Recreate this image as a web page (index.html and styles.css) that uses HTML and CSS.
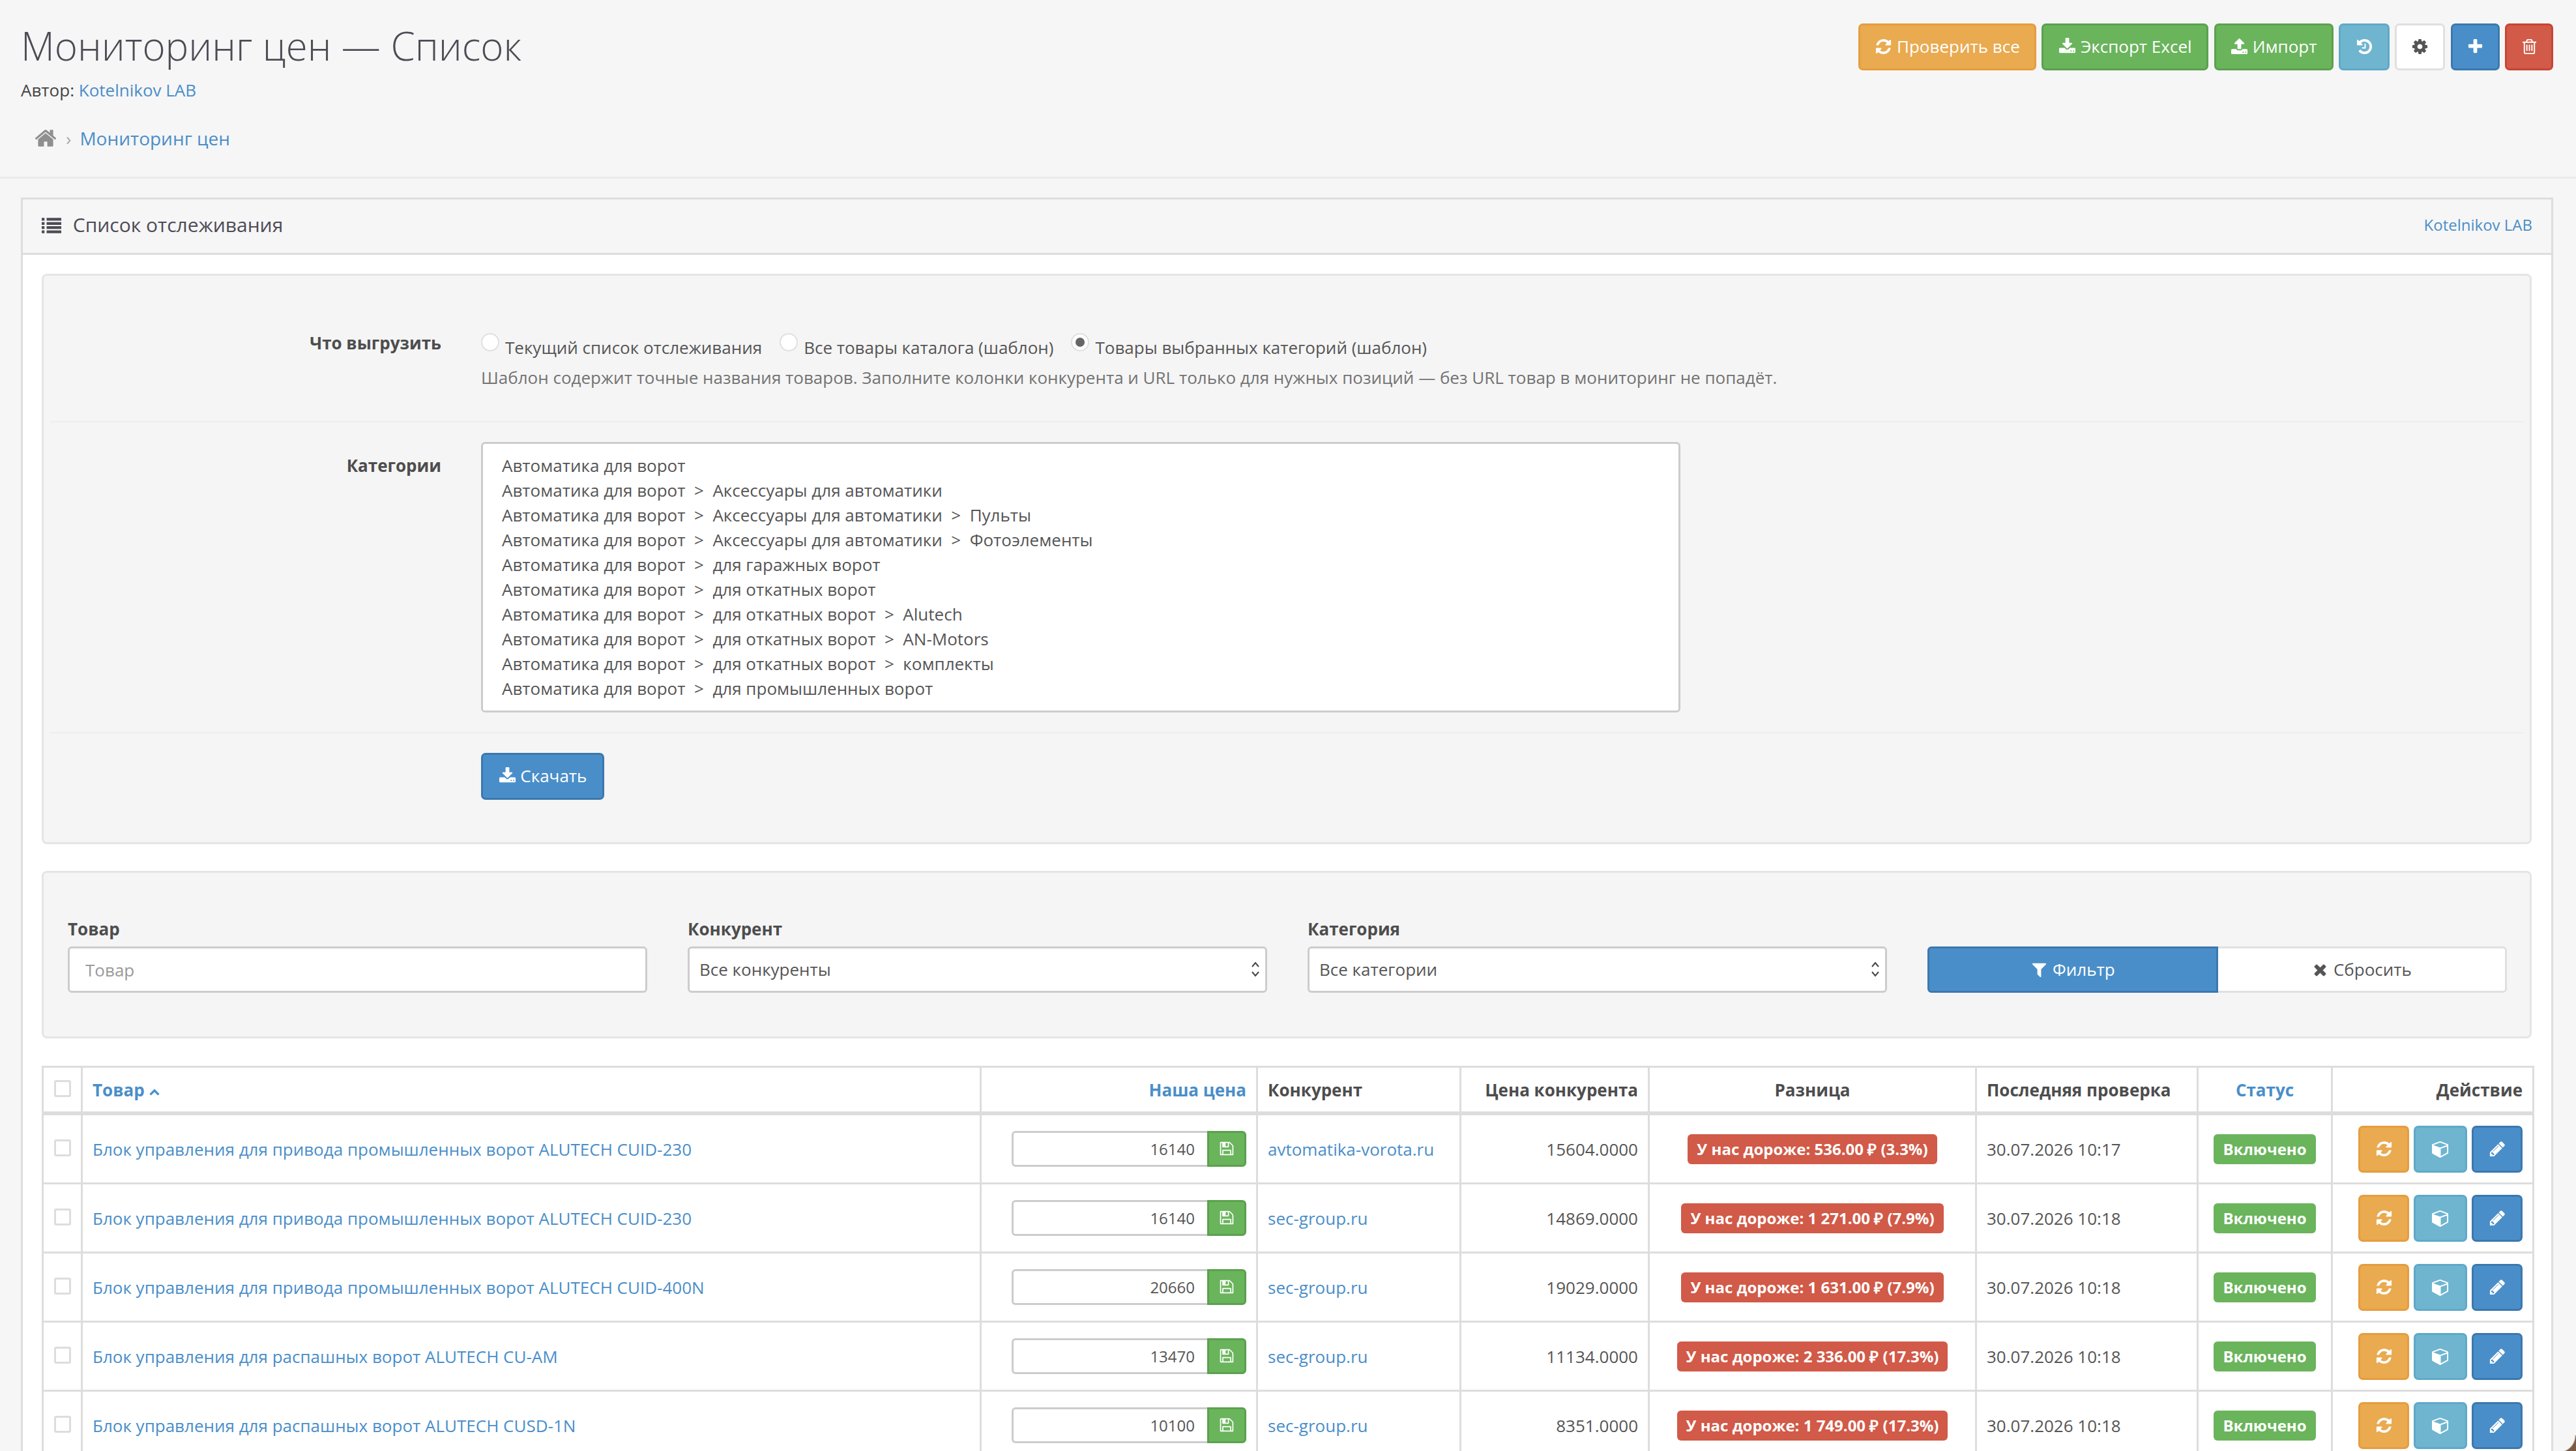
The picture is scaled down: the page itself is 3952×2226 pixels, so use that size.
FILE: index.html
```html
<!DOCTYPE html>
<html lang="ru">
<head>
  <meta charset="UTF-8">
  <title>Мониторинг цен — Список</title>
  <link rel="stylesheet" href="styles.css">
</head>
<body>
  <svg class="sprite" xmlns="http://www.w3.org/2000/svg">
    <symbol id="i-refresh" viewBox="0 0 1792 1792"><path d="M1639 1056q0 5-1 7-64 268-268 434.5t-478 166.5q-146 0-282.5-55t-243.5-157l-129 129q-19 19-45 19t-45-19-19-45v-448q0-26 19-45t45-19h448q26 0 45 19t19 45-19 45l-137 137q71 66 161 102t187 36q134 0 250-65t186-179q11-17 53-117 8-23 30-23h192q13 0 22.5 9.5t9.5 22.5zm25-800v448q0 26-19 45t-45 19h-448q-26 0-45-19t-19-45 19-45l138-138q-148-137-349-137-134 0-250 65t-186 179q-11 17-53 117-8 23-30 23h-199q-13 0-22.5-9.5t-9.5-22.5v-7q65-268 270-434.5t480-166.5q146 0 284 55.5t245 156.5l130-129q19-19 45-19t45 19 19 45z"/></symbol>
    <symbol id="i-download" viewBox="0 0 1792 1792"><path d="M1344 1344q0-26-19-45t-45-19-45 19-19 45 19 45 45 19 45-19 19-45zm256 0q0-26-19-45t-45-19-45 19-19 45 19 45 45 19 45-19 19-45zm128-224v320q0 40-28 68t-68 28h-1472q-40 0-68-28t-28-68v-320q0-40 28-68t68-28h465l135 136q58 56 136 56t136-56l136-136h464q40 0 68 28t28 68zm-325-569q17 41-14 70l-448 448q-18 19-45 19t-45-19l-448-448q-31-29-14-70 17-39 59-39h256v-448q0-26 19-45t45-19h256q26 0 45 19t19 45v448h256q42 0 59 39z"/></symbol>
    <symbol id="i-upload" viewBox="0 0 1792 1792"><path d="M1344 1472q0-26-19-45t-45-19-45 19-19 45 19 45 45 19 45-19 19-45zm256 0q0-26-19-45t-45-19-45 19-19 45 19 45 45 19 45-19 19-45zm128-224v320q0 40-28 68t-68 28h-1472q-40 0-68-28t-28-68v-320q0-40 28-68t68-28h427q21 56 70.5 92t110.5 36h256q61 0 110.5-36t70.5-92h427q40 0 68 28t28 68zm-325-648q-17 40-59 40h-256v448q0 26-19 45t-45 19h-256q-26 0-45-19t-19-45v-448h-256q-42 0-59-40-17-39 14-69l448-448q18-19 45-19t45 19l448 448q31 30 14 69z"/></symbol>
    <symbol id="i-history" viewBox="0 0 1792 1792"><path d="M1664 896q0 156-61 298t-164 245-245 164-298 61q-172 0-327-72.5t-264-204.5q-7-10-6.5-22.5t8.5-20.5l137-138q10-9 25-9 16 2 23 12 73 95 179 147t225 52q104 0 198.5-40.5t163.5-109.5 109.5-163.5 40.5-198.5-40.5-198.5-109.5-163.5-163.5-109.5-198.5-40.5q-98 0-188 35.5t-160 101.5l137 138q31 30 14 69-17 40-59 40h-448q-26 0-45-19t-19-45v-448q0-42 40-59 39-17 69 14l130 129q107-101 244.5-156.5t284.5-55.5q156 0 298 61t245 164 164 245 61 298zm-640-288v448q0 14-9 23t-23 9h-320q-14 0-23-9t-9-23v-64q0-14 9-23t23-9h224v-352q0-14 9-23t23-9h64q14 0 23 9t9 23z"/></symbol>
    <symbol id="i-cog" viewBox="0 0 1792 1792"><path d="M1152 896q0-106-75-181t-181-75-181 75-75 181 75 181 181 75 181-75 75-181zm512-109v222q0 12-8 23t-20 13l-185 28q-19 54-39 91 35 50 107 138 10 12 10 25t-9 23q-27 37-99 108t-94 71q-12 0-26-9l-138-108q-44 23-91 38-16 136-29 186-7 28-36 28h-222q-14 0-24.5-8.5t-11.5-21.5l-28-184q-49-16-90-37l-141 107q-10 9-25 9-14 0-25-11-126-114-165-168-7-10-7-23 0-12 8-23 15-21 51-66.5t54-70.5q-27-50-41-99l-183-27q-13-2-21-12.5t-8-23.5v-222q0-12 8-23t19-13l186-28q14-46 39-92-40-57-107-138-10-12-10-24 0-10 9-23 26-36 98.5-107.5t94.5-71.5q13 0 26 10l138 107q44-23 91-38 16-136 29-186 7-28 36-28h222q14 0 24.5 8.5t11.5 21.5l28 184q49 16 90 37l142-107q9-9 24-9 13 0 25 10 129 119 165 170 7 8 7 22 0 12-8 23-15 21-51 66.5t-54 70.5q26 50 41 98l183 28q13 2 21 12.5t8 23.5z"/></symbol>
    <symbol id="i-plus" viewBox="0 0 1792 1792"><path d="M1600 736v192q0 40-28 68t-68 28h-416v416q0 40-28 68t-68 28h-192q-40 0-68-28t-28-68v-416h-416q-40 0-68-28t-28-68v-192q0-40 28-68t68-28h416v-416q0-40 28-68t68-28h192q40 0 68 28t28 68v416h416q40 0 68 28t28 68z"/></symbol>
    <symbol id="i-trash" viewBox="0 0 1792 1792"><path d="M704 736v576q0 14-9 23t-23 9h-64q-14 0-23-9t-9-23v-576q0-14 9-23t23-9h64q14 0 23 9t9 23zm256 0v576q0 14-9 23t-23 9h-64q-14 0-23-9t-9-23v-576q0-14 9-23t23-9h64q14 0 23 9t9 23zm256 0v576q0 14-9 23t-23 9h-64q-14 0-23-9t-9-23v-576q0-14 9-23t23-9h64q14 0 23 9t9 23zm128 724v-948h-896v948q0 22 7 40.5t14.5 27 10.5 8.5h832q3 0 10.5-8.5t14.5-27 7-40.5zm-672-1076h448l-48-117q-7-9-17-11h-317q-10 2-17 11zm928 32v64q0 14-9 23t-23 9h-96v948q0 83-47 143.5t-113 60.5h-832q-66 0-113-58.5t-47-141.5v-952h-96q-14 0-23-9t-9-23v-64q0-14 9-23t23-9h309l70-167q15-37 54-63t79-26h320q40 0 79 26t54 63l70 167h309q14 0 23 9t9 23z"/></symbol>
    <symbol id="i-home" viewBox="0 0 1792 1792"><path d="M1472 992v480q0 26-19 45t-45 19h-384v-384h-256v384h-384q-26 0-45-19t-19-45v-480q0-1 .5-3t.5-3l575-474 575 474q1 2 1 6zm223-69l-62 74q-8 9-21 11h-3q-13 0-21-7l-692-577-692 577q-12 8-24 7-13-2-21-11l-62-74q-8-10-7-23.5t11-21.5l719-599q32-26 76-26t76 26l244 204v-195q0-14 9-23t23-9h192q14 0 23 9t9 23v408l219 182q10 8 11 21.5t-7 23.5z"/></symbol>
    <symbol id="i-list" viewBox="0 0 1792 1792"><path d="M0 192h256v256h-256zM448 192h1344v256h-1344zM0 576h256v256h-256zM448 576h1344v256h-1344zM0 960h256v256h-256zM448 960h1344v256h-1344zM0 1344h256v256h-256zM448 1344h1344v256h-1344z"/></symbol>
    <symbol id="i-filter" viewBox="0 0 1792 1792"><path d="M1595 295q17 41-14 70l-493 493v742q0 42-39 59-13 5-25 5-27 0-45-19l-256-256q-19-19-19-45v-486l-493-493q-31-29-14-70 17-39 59-39h1280q42 0 59 39z"/></symbol>
    <symbol id="i-times" viewBox="0 0 1792 1792"><path d="M1490 1322q0 40-28 68l-136 136q-28 28-68 28t-68-28l-294-294-294 294q-28 28-68 28t-68-28l-136-136q-28-28-28-68t28-68l294-294-294-294q-28-28-28-68t28-68l136-136q28-28 68-28t68 28l294 294 294-294q28-28 68-28t68 28l136 136q28 28 28 68t-28 68l-294 294 294 294q28 28 28 68z"/></symbol>
    <symbol id="i-save" viewBox="0 0 1792 1792"><path d="M512 1536h768v-384h-768v384zm896 0h128v-896q0-14-10-38.5t-20-34.5l-281-281q-10-10-34-20t-39-10v416q0 40-28 68t-68 28h-576q-40 0-68-28t-28-68v-416h-128v1280h128v-416q0-40 28-68t68-28h832q40 0 68 28t28 68v416zm-384-928v-320q0-13-9.5-22.5t-22.5-9.5h-192q-13 0-22.5 9.5t-9.5 22.5v320q0 13 9.5 22.5t22.5 9.5h192q13 0 22.5-9.5t9.5-22.5zm640 32v928q0 40-28 68t-68 28h-1344q-40 0-68-28t-28-68v-1344q0-40 28-68t68-28h928q40 0 88 20t76 48l280 280q28 28 48 76t20 88z"/></symbol>
    <symbol id="i-cube" viewBox="0 0 1792 1792"><path d="M896 1629l640-349v-636l-640 233v752zm-64-865l698-254-698-254-698 254zm832-252v768q0 35-18 65t-49 47l-704 384q-28 16-61 16t-61-16l-704-384q-31-17-49-47t-18-65v-768q0-40 23-73t61-47l704-256q22-8 44-8t44 8l704 256q38 14 61 47t23 73z"/></symbol>
    <symbol id="i-pencil" viewBox="0 0 1792 1792"><path d="M491 1536l91-91-235-235-91 91v107h128v128h107zm523-928q0-22-22-22-10 0-17 7l-542 542q-7 7-7 17 0 22 22 22 10 0 17-7l542-542q7-7 7-17zm-54-192l416 416-832 832h-416v-416zm683 96q0 53-37 90l-166 166-416-416 166-165q36-38 90-38 53 0 91 38l235 234q37 39 37 91z"/></symbol>
  </svg>

  <div class="page-header">
    <div class="page-title">
      <h1>Мониторинг цен — Список</h1>
      <div class="author">Автор: <a href="#">Kotelnikov LAB</a></div>
      <div class="breadcrumb">
        <svg class="ic ic-home"><use href="#i-home"/></svg>
        <span class="crumb-sep">›</span>
        <a href="#">Мониторинг цен</a>
      </div>
    </div>
    <div class="page-actions">
      <a class="btn btn-warning"><svg class="ic"><use href="#i-refresh"/></svg> Проверить все</a>
      <a class="btn btn-success"><svg class="ic"><use href="#i-download"/></svg> Экспорт Excel</a>
      <a class="btn btn-success"><svg class="ic"><use href="#i-upload"/></svg> Импорт</a>
      <a class="btn btn-info btn-icon"><svg class="ic"><use href="#i-history"/></svg></a>
      <a class="btn btn-default btn-icon"><svg class="ic"><use href="#i-cog"/></svg></a>
      <a class="btn btn-primary btn-icon"><svg class="ic"><use href="#i-plus"/></svg></a>
      <a class="btn btn-danger btn-icon"><svg class="ic"><use href="#i-trash"/></svg></a>
    </div>
  </div>

  <div class="panel">
    <div class="panel-heading">
      <h3><svg class="ic"><use href="#i-list"/></svg> Список отслеживания</h3>
      <a class="panel-link" href="#">Kotelnikov LAB</a>
    </div>
    <div class="panel-body">

      <div class="well export-well">
        <div class="form-row form-row-first">
          <label class="form-label">Что выгрузить</label>
          <div>
            <div class="radios">
              <label class="radio"><span class="radio-dot"></span> Текущий список отслеживания</label>
              <label class="radio"><span class="radio-dot"></span> Все товары каталога (шаблон)</label>
              <label class="radio"><span class="radio-dot checked"></span> Товары выбранных категорий (шаблон)</label>
            </div>
            <div class="help">Шаблон содержит точные названия товаров. Заполните колонки конкурента и URL только для нужных позиций — без URL товар в мониторинг не попадёт.</div>
          </div>
        </div>
        <div class="form-row">
          <label class="form-label form-label-list">Категории</label>
          <div class="listbox">
            <div>Автоматика для ворот</div>
            <div>Автоматика для ворот&nbsp;&nbsp;&gt;&nbsp;&nbsp;Аксессуары для автоматики</div>
            <div>Автоматика для ворот&nbsp;&nbsp;&gt;&nbsp;&nbsp;Аксессуары для автоматики&nbsp;&nbsp;&gt;&nbsp;&nbsp;Пульты</div>
            <div>Автоматика для ворот&nbsp;&nbsp;&gt;&nbsp;&nbsp;Аксессуары для автоматики&nbsp;&nbsp;&gt;&nbsp;&nbsp;Фотоэлементы</div>
            <div>Автоматика для ворот&nbsp;&nbsp;&gt;&nbsp;&nbsp;для гаражных ворот</div>
            <div>Автоматика для ворот&nbsp;&nbsp;&gt;&nbsp;&nbsp;для откатных ворот</div>
            <div>Автоматика для ворот&nbsp;&nbsp;&gt;&nbsp;&nbsp;для откатных ворот&nbsp;&nbsp;&gt;&nbsp;&nbsp;Alutech</div>
            <div>Автоматика для ворот&nbsp;&nbsp;&gt;&nbsp;&nbsp;для откатных ворот&nbsp;&nbsp;&gt;&nbsp;&nbsp;AN-Motors</div>
            <div>Автоматика для ворот&nbsp;&nbsp;&gt;&nbsp;&nbsp;для откатных ворот&nbsp;&nbsp;&gt;&nbsp;&nbsp;комплекты</div>
            <div>Автоматика для ворот&nbsp;&nbsp;&gt;&nbsp;&nbsp;для промышленных ворот</div>
          </div>
        </div>
        <div class="form-row form-row-last">
          <span></span>
          <div><a class="btn btn-primary btn-download"><svg class="ic"><use href="#i-download"/></svg> Скачать</a></div>
        </div>
      </div>

      <div class="well filter-well">
        <div class="filter-col">
          <label class="filter-label">Товар</label>
          <input class="form-control" type="text" placeholder="Товар">
        </div>
        <div class="filter-col">
          <label class="filter-label">Конкурент</label>
          <div class="select-box">Все конкуренты <svg class="select-arrows" viewBox="0 0 14 26"><path d="M2 9l5-6 5 6M2 17l5 6 5-6"/></svg></div>
        </div>
        <div class="filter-col">
          <label class="filter-label">Категория</label>
          <div class="select-box">Все категории <svg class="select-arrows" viewBox="0 0 14 26"><path d="M2 9l5-6 5 6M2 17l5 6 5-6"/></svg></div>
        </div>
        <div class="filter-col filter-buttons">
          <a class="btn btn-primary"><svg class="ic"><use href="#i-filter"/></svg> Фильтр</a>
          <a class="btn btn-default"><svg class="ic"><use href="#i-times"/></svg> Сбросить</a>
        </div>
      </div>

      <table class="list-table">
        <colgroup>
          <col class="col-check"><col class="col-name"><col class="col-price"><col class="col-comp">
          <col class="col-cprice"><col class="col-diff"><col class="col-date"><col class="col-status"><col class="col-action">
        </colgroup>
        <thead>
          <tr>
            <th><span class="check"></span></th>
            <th><a href="#">Товар <svg class="sort-up" viewBox="0 0 14 10"><path d="M2 8l5-5 5 5"/></svg></a></th>
            <th class="right"><a href="#">Наша цена</a></th>
            <th>Конкурент</th>
            <th class="right">Цена конкурента</th>
            <th class="center">Разница</th>
            <th>Последняя проверка</th>
            <th class="center"><a href="#">Статус</a></th>
            <th class="right">Действие</th>
          </tr>
        </thead>
        <tbody>
          <tr>
            <td><span class="check"></span></td>
            <td><a href="#">Блок управления для привода промышленных ворот ALUTECH CUID-230</a></td>
            <td><div class="price-group"><input class="price-input" type="text" value="16140"><a class="btn btn-success price-save"><svg class="ic"><use href="#i-save"/></svg></a></div></td>
            <td><a href="#">avtomatika-vorota.ru</a></td>
            <td class="right">15604.0000</td>
            <td class="center"><span class="label label-danger">У нас дороже: 536.00 ₽ (3.3%)</span></td>
            <td>30.07.2026 10:17</td>
            <td class="center"><span class="label label-success">Включено</span></td>
            <td><div class="row-actions"><a class="btn btn-warning"><svg class="ic"><use href="#i-refresh"/></svg></a><a class="btn btn-info btn-cube"><svg class="ic"><use href="#i-cube"/></svg></a><a class="btn btn-primary"><svg class="ic"><use href="#i-pencil"/></svg></a></div></td>
          </tr>
          <tr>
            <td><span class="check"></span></td>
            <td><a href="#">Блок управления для привода промышленных ворот ALUTECH CUID-230</a></td>
            <td><div class="price-group"><input class="price-input" type="text" value="16140"><a class="btn btn-success price-save"><svg class="ic"><use href="#i-save"/></svg></a></div></td>
            <td><a href="#">sec-group.ru</a></td>
            <td class="right">14869.0000</td>
            <td class="center"><span class="label label-danger">У нас дороже: 1 271.00 ₽ (7.9%)</span></td>
            <td>30.07.2026 10:18</td>
            <td class="center"><span class="label label-success">Включено</span></td>
            <td><div class="row-actions"><a class="btn btn-warning"><svg class="ic"><use href="#i-refresh"/></svg></a><a class="btn btn-info btn-cube"><svg class="ic"><use href="#i-cube"/></svg></a><a class="btn btn-primary"><svg class="ic"><use href="#i-pencil"/></svg></a></div></td>
          </tr>
          <tr>
            <td><span class="check"></span></td>
            <td><a href="#">Блок управления для привода промышленных ворот ALUTECH CUID-400N</a></td>
            <td><div class="price-group"><input class="price-input" type="text" value="20660"><a class="btn btn-success price-save"><svg class="ic"><use href="#i-save"/></svg></a></div></td>
            <td><a href="#">sec-group.ru</a></td>
            <td class="right">19029.0000</td>
            <td class="center"><span class="label label-danger">У нас дороже: 1 631.00 ₽ (7.9%)</span></td>
            <td>30.07.2026 10:18</td>
            <td class="center"><span class="label label-success">Включено</span></td>
            <td><div class="row-actions"><a class="btn btn-warning"><svg class="ic"><use href="#i-refresh"/></svg></a><a class="btn btn-info btn-cube"><svg class="ic"><use href="#i-cube"/></svg></a><a class="btn btn-primary"><svg class="ic"><use href="#i-pencil"/></svg></a></div></td>
          </tr>
          <tr>
            <td><span class="check"></span></td>
            <td><a href="#">Блок управления для распашных ворот ALUTECH CU-AM</a></td>
            <td><div class="price-group"><input class="price-input" type="text" value="13470"><a class="btn btn-success price-save"><svg class="ic"><use href="#i-save"/></svg></a></div></td>
            <td><a href="#">sec-group.ru</a></td>
            <td class="right">11134.0000</td>
            <td class="center"><span class="label label-danger">У нас дороже: 2 336.00 ₽ (17.3%)</span></td>
            <td>30.07.2026 10:18</td>
            <td class="center"><span class="label label-success">Включено</span></td>
            <td><div class="row-actions"><a class="btn btn-warning"><svg class="ic"><use href="#i-refresh"/></svg></a><a class="btn btn-info btn-cube"><svg class="ic"><use href="#i-cube"/></svg></a><a class="btn btn-primary"><svg class="ic"><use href="#i-pencil"/></svg></a></div></td>
          </tr>
          <tr>
            <td><span class="check"></span></td>
            <td><a href="#">Блок управления для распашных ворот ALUTECH CUSD-1N</a></td>
            <td><div class="price-group"><input class="price-input" type="text" value="10100"><a class="btn btn-success price-save"><svg class="ic"><use href="#i-save"/></svg></a></div></td>
            <td><a href="#">sec-group.ru</a></td>
            <td class="right">8351.0000</td>
            <td class="center"><span class="label label-danger">У нас дороже: 1 749.00 ₽ (17.3%)</span></td>
            <td>30.07.2026 10:18</td>
            <td class="center"><span class="label label-success">Включено</span></td>
            <td><div class="row-actions"><a class="btn btn-warning"><svg class="ic"><use href="#i-refresh"/></svg></a><a class="btn btn-info btn-cube"><svg class="ic"><use href="#i-cube"/></svg></a><a class="btn btn-primary"><svg class="ic"><use href="#i-pencil"/></svg></a></div></td>
          </tr>
        </tbody>
      </table>

    </div>
  </div>

  <div class="window-corner"></div>
</body>
</html>
```

FILE: styles.css
```css
html, body {
  margin: 0;
  height: 2226px;
  overflow: hidden;
}

body {
  position: relative;
  background: #f6f6f6;
  color: #555;
  font-family: "Open Sans", sans-serif;
  font-size: 26px;
  line-height: 38px;
}

a {
  color: #4a8ec9;
  text-decoration: none;
}

.sprite {
  display: none;
}

.ic {
  width: 27px;
  height: 27px;
  fill: currentColor;
  vertical-align: -4px;
}

/* page header */
.page-header {
  display: flex;
  justify-content: space-between;
  box-sizing: border-box;
  height: 274px;
  padding: 36px 35px 0 32px;
  border-bottom: 3px solid #ebebeb;
}

.page-header h1 {
  margin: 0;
  color: #4c4c55;
  font-size: 60px;
  font-weight: 300;
  line-height: 68px;
}

.author {
  margin-top: 16px;
  color: #444;
  font-size: 26px;
  line-height: 36px;
}

.breadcrumb {
  display: flex;
  align-items: center;
  margin: 36px 0 0 20px;
  font-size: 28px;
  line-height: 40px;
}

.ic-home {
  width: 36px;
  height: 36px;
  color: #8f8f8f;
}

.crumb-sep {
  margin: 0 13px 0 13px;
  color: #aaa;
}

.page-actions {
  display: flex;
  gap: 8.33px;
  align-items: flex-start;
}

/* buttons */
.btn {
  display: inline-block;
  box-sizing: border-box;
  height: 72px;
  padding: 0 26px;
  border: 3px solid;
  border-radius: 7px;
  color: #fff;
  font-size: 26px;
  line-height: 64px;
  text-align: center;
  white-space: nowrap;
}

.btn-warning { background: #e9aa50; border-color: #e69d3e; }
.btn-success { background: #6ab45c; border-color: #5ba14e; }
.btn-info { background: #6fb5cf; border-color: #5fa9c8; }
.btn-primary { background: #4a8ec9; border-color: #3b78ae; }
.btn-danger { background: #d15a48; border-color: #c94434; }
.btn-default { background: #fff; border-color: #e0e0e0; color: #555; }

.btn-icon {
  padding: 0;
}

.page-actions .btn { padding: 0; }
.page-actions .btn:nth-child(1) { width: 273px; }
.page-actions .btn:nth-child(2) { width: 256px; }
.page-actions .btn:nth-child(3) { width: 183px; }
.page-actions .btn:nth-child(4) { width: 78px; }
.page-actions .btn:nth-child(5) { width: 77px; }
.page-actions .btn:nth-child(6) { width: 75px; }
.page-actions .btn:nth-child(7) { width: 74px; }

.btn-download {
  width: 189px;
  padding: 0;
}

/* panel */
.panel {
  margin: 29px 35px 0 32px;
  border: 3px solid #ddd;
  border-bottom: 0;
  background: #fff;
}

.panel-heading {
  display: flex;
  justify-content: space-between;
  align-items: center;
  box-sizing: border-box;
  height: 85px;
  border-bottom: 3px solid #ddd;
  background: #f6f6f6;
  padding: 0 29px 4px 29px;
}

.panel-heading h3 {
  margin: 0;
  color: #4c4c55;
  font-size: 30px;
  font-weight: 400;
}

.panel-heading .ic {
  width: 30px;
  height: 30px;
  margin-right: 10px;
  vertical-align: -5px;
}

.panel-link {
  font-size: 24px;
}

.panel-body {
  padding: 29px 30px 0 29px;
}

.well {
  box-sizing: border-box;
  border: 3px solid #e5e5e5;
  border-radius: 8px;
  background: #f5f5f5;
}

/* export form */
.export-well {
  padding: 0 10px 66px;
  height: 875px;
}

.form-row {
  display: grid;
  grid-template-columns: 600px 1fr;
  column-gap: 61px;
  padding: 30px 0;
  border-top: 2px solid #eee;
}

.form-row-first {
  padding: 91px 0 48px;
  border-top: 0;
}

.form-label {
  color: #4d4d4d;
  font-weight: 700;
  text-align: right;
  line-height: 36px;
}

.form-row-first .form-label {
  margin-top: -6px;
}

.form-label-list {
  margin-top: 18px;
}

.radios {
  display: flex;
  gap: 27px;
}

.radio {
  display: flex;
  align-items: flex-start;
  gap: 9px;
}

.radio-dot {
  position: relative;
  flex: none;
  box-sizing: border-box;
  width: 28px;
  height: 28px;
  margin-top: -3px;
  border: 2px solid #e0e0e0;
  border-radius: 50%;
  background: #fff;
}

.radio-dot.checked::after {
  content: "";
  position: absolute;
  inset: 5px;
  border-radius: 50%;
  background: #666;
}

.help {
  margin-top: 8px;
  color: #737373;
}

.listbox {
  box-sizing: border-box;
  width: 1840px;
  height: 415px;
  padding: 14px 29px;
  border: 3px solid #ccc;
  border-radius: 6px;
  background: #fff;
}

/* filter */
.filter-well {
  display: grid;
  grid-template-columns: repeat(4, 1fr);
  column-gap: 62px;
  height: 257px;
  margin-top: 41px;
  padding: 68px 35px 0 37px;
}

.filter-label {
  display: block;
  margin-bottom: 9px;
  color: #4d4d4d;
  font-weight: 700;
  line-height: 36px;
}

.form-control,
.select-box {
  display: block;
  position: relative;
  box-sizing: border-box;
  width: 100%;
  height: 71px;
  border: 3px solid #ccc;
  border-radius: 6px;
  background: #fff;
  color: #555;
  font-family: inherit;
  font-size: 26px;
  line-height: 65px;
}

.form-control {
  padding: 0 24px;
}

.form-control::placeholder {
  color: #999;
}

.select-box {
  padding: 0 15px;
}

.select-arrows {
  position: absolute;
  top: 19px;
  right: 8px;
  width: 14px;
  height: 26px;
  fill: none;
  stroke: #444;
  stroke-width: 2;
}

.filter-buttons {
  display: flex;
  align-items: flex-start;
  padding-top: 45px;
}

.filter-buttons .btn {
  flex: 1;
  height: 71px;
  padding: 0;
  line-height: 65px;
}

.filter-buttons .btn-primary {
  border-radius: 6px 0 0 6px;
}

.filter-buttons .btn-default {
  border-left: 0;
  border-radius: 0 6px 6px 0;
}

/* table */
.list-table {
  width: 3821px;
  margin-top: 42px;
  border-collapse: collapse;
  table-layout: fixed;
  background: #fff;
}

.col-check { width: 60px; }
.col-name { width: 1379px; }
.col-price { width: 424px; }
.col-comp { width: 312px; }
.col-cprice { width: 289px; }
.col-diff { width: 502px; }
.col-date { width: 340px; }
.col-status { width: 206px; }
.col-action { width: 309px; }

.list-table th,
.list-table td {
  padding: 0 15px;
  border: 3px solid #ddd;
  text-align: left;
  vertical-align: middle;
  white-space: nowrap;
}

.list-table th {
  height: 63px;
  border-bottom-width: 6px;
  color: #4d4d4d;
  font-weight: 700;
}

.list-table td {
  height: 99px;
}

.list-table th:first-child,
.list-table td:first-child {
  padding: 0 0 4px 16px;
}

.list-table .right { text-align: right; }
.list-table .center { text-align: center; }

.sort-up {
  width: 18px;
  height: 13px;
  fill: none;
  stroke: currentColor;
  stroke-width: 2.6;
}

.check {
  display: block;
  box-sizing: border-box;
  width: 26px;
  height: 26px;
  border: 3px solid #ddd;
  border-radius: 3px;
  background: #fff;
}

.price-group {
  display: flex;
  justify-content: flex-end;
}

.price-input {
  box-sizing: border-box;
  width: 300px;
  height: 55px;
  padding: 0 19px 0 10px;
  border: 3px solid #ccc;
  border-right: 0;
  border-radius: 6px 0 0 6px;
  color: #555;
  font-family: inherit;
  font-size: 24px;
  text-align: right;
}

.price-save {
  width: 60px;
  height: 55px;
  padding: 0;
  border-radius: 0 6px 6px 0;
  line-height: 47px;
}

.price-save .ic {
  width: 24px;
  height: 24px;
  vertical-align: -3px;
}

.label {
  display: inline-block;
  height: 46px;
  padding: 0 14px;
  border-radius: 6px;
  color: #fff;
  font-size: 24px;
  font-weight: 700;
  line-height: 46px;
}

.label-danger { background: #d15a48; }
.label-success { background: #6ab45c; }

.row-actions {
  display: flex;
  justify-content: flex-end;
  gap: 7px;
}

.row-actions .btn {
  width: 78px;
  padding: 0;
}

.row-actions .btn-cube {
  width: 82px;
}

.window-corner {
  position: absolute;
  right: 0;
  bottom: 0;
  width: 27px;
  height: 24px;
  background: radial-gradient(circle at 0 0, transparent 25px, #7d5c45 27px);
}
```
